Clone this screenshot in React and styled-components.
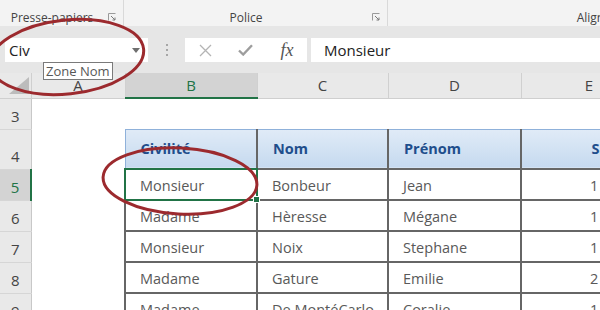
import React from "react";
import styled, { createGlobalStyle, css } from "styled-components";

const GlobalStyle = createGlobalStyle`
  html, body {
    margin: 0;
    padding: 0;
    background: #ffffff;
  }
  body {
    font-family: "Open Sans", "Liberation Sans", sans-serif;
  }
`;

const columns = [
  { key: "A", width: 94 },
  { key: "B", width: 132, selected: true },
  { key: "C", width: 131 },
  { key: "D", width: 133 },
  { key: "E", width: 136 },
];

const headers = ["Civilité", "Nom", "Prénom", "Salaire"];

const people = [
  ["Monsieur", "Bonbeur", "Jean", "1 850 €"],
  ["Madame", "Hèresse", "Mégane", "1 720 €"],
  ["Monsieur", "Noix", "Stephane", "1 640 €"],
  ["Madame", "Gature", "Emilie", "2 150 €"],
  ["Madame", "De MontéCarlo", "Coralie", "1 900 €"],
];

const Launcher = () => (
  <LauncherIcon width="8" height="8" viewBox="0 0 8 8">
    <path d="M0.5 7.5V0.5H7.5" fill="none" stroke="#9a9a9a" strokeWidth="1" />
    <path d="M3 3L7 7M7 4.5V7H4.5" fill="none" stroke="#7a7a7a" strokeWidth="1" />
  </LauncherIcon>
);

const App = () => {
  return (
    <Page>
      <GlobalStyle />
      <Ribbon>
        <Group $w={124}>
          <GroupLabel>Presse-papiers</GroupLabel>
          <Launcher />
        </Group>
        <Group $w={264}>
          <GroupLabel>Police</GroupLabel>
          <Launcher />
        </Group>
        <Group $w={442}>
          <GroupLabel>Alignement</GroupLabel>
        </Group>
      </Ribbon>

      <FormulaBar>
        <NameBox>
          <span>Civ</span>
          <svg width="8" height="5" viewBox="0 0 8 5">
            <path d="M0 0H8L4 5Z" fill="#6f6f6f" />
          </svg>
        </NameBox>
        <Grip>
          <i />
          <i />
          <i />
        </Grip>
        <FxBox>
          <FxSlot>
            <svg width="13" height="13" viewBox="0 0 13 13">
              <path d="M1 1L12 12M12 1L1 12" stroke="#b4b4b4" strokeWidth="1.3" />
            </svg>
          </FxSlot>
          <FxSlot>
            <svg width="15" height="12" viewBox="0 0 15 12">
              <path d="M1 6.5L5.2 10.5L14 1.2" fill="none" stroke="#9d9d9d" strokeWidth="2.4" />
            </svg>
          </FxSlot>
          <FxSlot>
            <FxText>fx</FxText>
          </FxSlot>
        </FxBox>
        <FormulaInput>Monsieur</FormulaInput>
      </FormulaBar>

      <Sheet>
        <colgroup>
          <Col $w={31} />
          {columns.map(c => (
            <Col key={c.key} $w={c.width} />
          ))}
        </colgroup>
        <thead>
          <tr>
            <Corner>
              <svg width="20" height="17" viewBox="0 0 20 17">
                <path d="M20 0V17H0Z" fill="#bcbcbc" />
              </svg>
            </Corner>
            {columns.map(c => (
              <ColHead key={c.key} $selected={c.selected}>
                {c.key}
              </ColHead>
            ))}
          </tr>
        </thead>
        <tbody>
          <SheetRow $h={31}>
            <RowHead>3</RowHead>
            {columns.map(c => (
              <EmptyCell key={c.key} />
            ))}
          </SheetRow>
          <SheetRow $h={40}>
            <RowHead>4</RowHead>
            <EmptyCell />
            {headers.map((h, i) => (
              <HeadCell key={h} $first={i === 0} $num={i === 3}>
                {h}
              </HeadCell>
            ))}
          </SheetRow>
          {people.map((p, r) => (
            <SheetRow key={r} $h={31}>
              <RowHead $selected={r === 0}>{r + 5}</RowHead>
              <EmptyCell />
              {p.map((v, i) => (
                <Cell key={i} $num={i === 3} $active={r === 0 && i === 0}>
                  {v}
                </Cell>
              ))}
            </SheetRow>
          ))}
        </tbody>
      </Sheet>

      <Tooltip>Zone Nom</Tooltip>

      <Marks width="600" height="310" viewBox="0 0 600 310">
        <ellipse cx="67" cy="57" rx="77" ry="37" transform="rotate(-6 67 57)" />
        <ellipse cx="180" cy="181" rx="77" ry="33" transform="rotate(3 180 181)" />
      </Marks>
    </Page>
  );
};

export default App;

const Page = styled.div`
  position: relative;
  width: 600px;
  height: 310px;
  overflow: hidden;
  background: #ffffff;
`;

const Ribbon = styled.div`
  display: flex;
  height: 26px;
  background: #f3f3f3;
`;

const Group = styled.div`
  flex: none;
  width: ${p => p.$w}px;
  display: flex;
  align-items: flex-end;
  padding-bottom: 1px;
  box-sizing: border-box;
  border-right: 1px solid #d9d9d9;
`;

const GroupLabel = styled.div`
  flex: 1;
  text-align: center;
  font-size: 12px;
  line-height: 15px;
  color: #444444;
  white-space: nowrap;
`;

const LauncherIcon = styled.svg`
  flex: none;
  margin: 0 7px 4px 4px;
`;

const FormulaBar = styled.div`
  display: flex;
  align-items: flex-start;
  height: 47px;
  box-sizing: border-box;
  padding: 12px 0 0 5px;
  background: #e6e6e6;
`;

const NameBox = styled.div`
  flex: none;
  width: 143px;
  height: 24px;
  box-sizing: border-box;
  display: flex;
  align-items: center;
  justify-content: space-between;
  padding: 0 8px 0 4px;
  background: #ffffff;
  font-size: 15px;
  color: #222222;
`;

const Grip = styled.div`
  flex: none;
  width: 37px;
  height: 24px;
  display: flex;
  flex-direction: column;
  align-items: center;
  justify-content: center;
  gap: 3px;

  i {
    display: block;
    width: 2px;
    height: 2px;
    background: #a6a6a6;
  }
`;

const FxBox = styled.div`
  flex: none;
  width: 122px;
  height: 24px;
  display: flex;
  background: #ffffff;
`;

const FxSlot = styled.div`
  width: 40px;
  display: flex;
  align-items: center;
  justify-content: center;
`;

const FxText = styled.span`
  font-family: "Liberation Serif", serif;
  font-style: italic;
  font-size: 18px;
  color: #555555;
  margin-left: 4px;
`;

const FormulaInput = styled.div`
  flex: 1;
  height: 24px;
  margin-left: 4px;
  padding-left: 13px;
  background: #ffffff;
  font-size: 15px;
  line-height: 24px;
  color: #222222;
`;

const Sheet = styled.table`
  table-layout: fixed;
  border-collapse: collapse;
  width: 657px;
  font-family: "Open Sans", "Liberation Sans", sans-serif;
`;

const Col = styled.col`
  width: ${p => p.$w}px;
`;

const Corner = styled.th`
  height: 24px;
  padding: 0;
  background: #e9e9e9;
  border-right: 1px solid #cfcfcf;
  border-bottom: 1px solid #cfcfcf;
  text-align: right;
  vertical-align: bottom;

  svg {
    display: block;
    margin: 0 2px 4px auto;
  }
`;

const ColHead = styled.th`
  height: 24px;
  padding: 0;
  font-weight: 400;
  font-size: 15px;
  color: #444444;
  background: #e9e9e9;
  border-right: 1px solid #d0d0d0;
  border-bottom: 1px solid #cfcfcf;
  ${p =>
    p.$selected &&
    css`
      background: #d3d3d3;
      color: #217346;
      border-bottom: 2px solid #217346;
    `}
`;

const SheetRow = styled.tr`
  height: ${p => p.$h}px;
`;

const RowHead = styled.th`
  padding: 0;
  font-weight: 400;
  font-size: 15px;
  color: #444444;
  background: #e9e9e9;
  border-right: 1px solid #c8c8c8;
  border-bottom: 1px solid #d6d6d6;
  vertical-align: bottom;
  line-height: 26px;
  ${p =>
    p.$selected &&
    css`
      background: #d3d3d3;
      color: #217346;
      border-right: 2px solid #217346;
    `}
`;

const EmptyCell = styled.td`
  padding: 0;
`;

const HeadCell = styled.th`
  padding: 0 15px;
  font-size: 14.5px;
  font-weight: 700;
  color: #1f4e8c;
  text-align: ${p => (p.$num ? "right" : "left")};
  white-space: nowrap;
  background: linear-gradient(#e0ebf7, #c5d9ef);
  border-top: 1px solid #8fb1da;
  border-left: ${p => (p.$first ? "1px solid #8fb1da" : "2px solid #666666")};
  border-right: 2px solid #666666;
  border-bottom: 2px solid #666666;
`;

const Cell = styled.td`
  position: relative;
  padding: 2px ${p => (p.$num ? 17 : 14)}px 0 14px;
  font-size: 14.5px;
  color: #595959;
  text-align: ${p => (p.$num ? "right" : "left")};
  white-space: nowrap;
  border: 2px solid #666666;
  ${p =>
    p.$active &&
    css`
      outline: 2px solid #217346;
      outline-offset: -1px;

      &::after {
        content: "";
        position: absolute;
        right: -4px;
        bottom: -4px;
        width: 5px;
        height: 5px;
        background: #217346;
        border: 1px solid #ffffff;
      }
    `}
`;

const Tooltip = styled.div`
  position: absolute;
  left: 43px;
  top: 62px;
  height: 18px;
  box-sizing: border-box;
  padding: 0 2px;
  background: #ffffff;
  border: 1px solid #7a7a7a;
  font-size: 13px;
  line-height: 16px;
  color: #575757;
  white-space: nowrap;
`;

const Marks = styled.svg`
  position: absolute;
  left: 0;
  top: 0;
  pointer-events: none;

  ellipse {
    fill: none;
    stroke: #9c2a2e;
    stroke-width: 3;
  }
`;
